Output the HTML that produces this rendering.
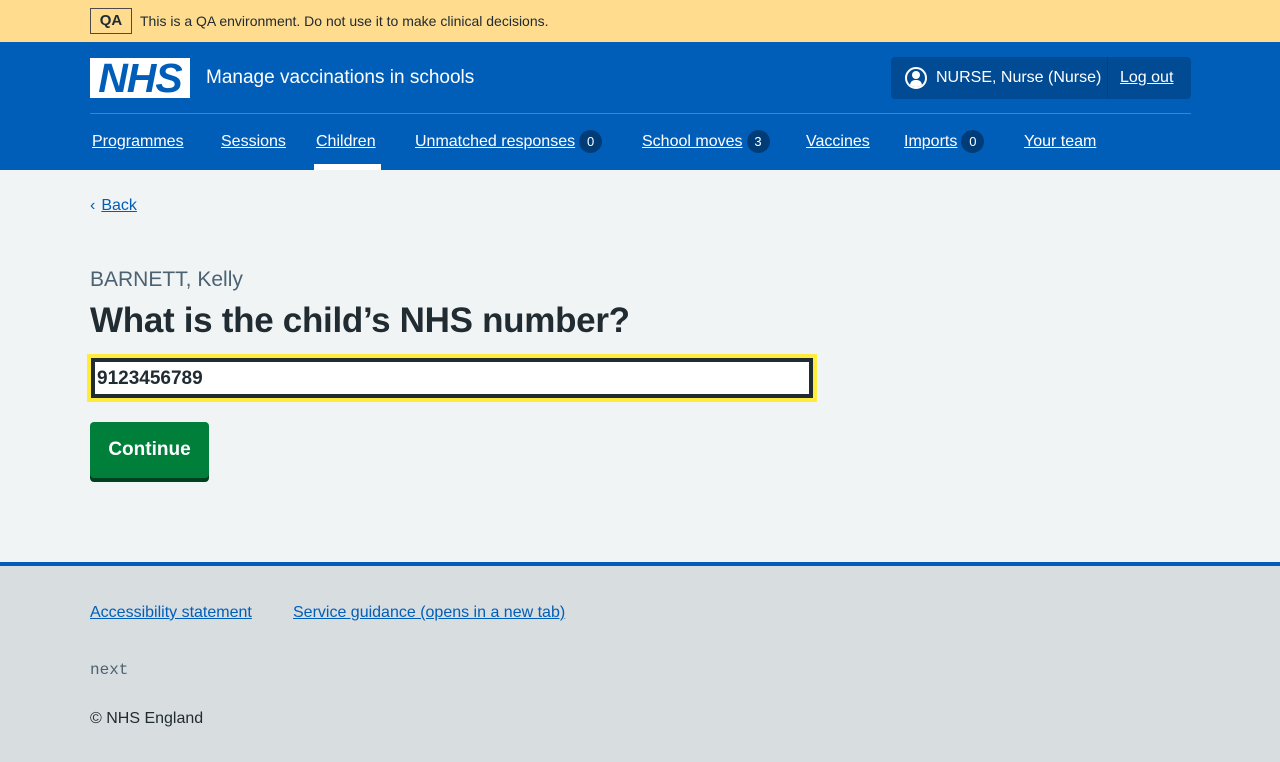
<!DOCTYPE html>
<html><head><meta charset="utf-8"><style>
*{box-sizing:border-box;margin:0;padding:0}
body{width:1280px;height:762px;font-family:"Liberation Sans",Arial,sans-serif;background:#f0f4f5;color:#212b32;overflow:hidden}
.qa{background:#ffdc8e;height:42px;position:relative}
.qa .tag{position:absolute;left:90px;top:8px;width:42px;height:26px;border:1px solid #4c4c4c;font-weight:bold;font-size:15px;text-align:center;line-height:24px}
.qa .t{position:absolute;left:140px;top:13px;font-size:14px}
.hd{background:#005eb8;height:128px;position:relative;color:#fff}
.logo{position:absolute;left:90px;top:16px;width:100px;height:40px;background:#fff}
.logo span{display:block;color:#005eb8;font-weight:bold;font-style:italic;font-size:41px;line-height:40px;text-align:center;letter-spacing:-1px}
.title{position:absolute;left:206px;top:25px;font-size:19px}
.acct{position:absolute;left:891px;top:15px;width:300px;height:42px;background:#004b93;border-radius:4px;font-size:16px}
.acct .ic{position:absolute;left:14px;top:10px;width:22px;height:22px;border:2px solid #fff;border-radius:50%;overflow:hidden}
.acct .n{position:absolute;left:45px;top:12px}
.acct .sep{position:absolute;left:216px;top:0;width:1px;height:42px;background:#00418a}
.acct .lo{position:absolute;left:229px;top:12px;text-decoration:underline}
.line{position:absolute;left:90px;right:89px;top:71px;height:1px;background:#3f83c9}
.nav{position:absolute;top:88px;height:24px;line-height:24px;font-size:16px;text-decoration:underline;white-space:nowrap}
.b{display:inline-block;background:#003d78;border-radius:12px;min-width:23px;height:23px;text-align:center;font-size:13px;line-height:23px;text-decoration:none;margin-left:4px;vertical-align:top}
.act{position:absolute;left:314px;top:122px;width:67px;height:6px;background:#fff}
a{color:#005eb8}
.back{position:absolute;left:90px;top:197px;font-size:16px;color:#005eb8}
.back u{margin-left:6px}
.cap{position:absolute;left:90px;top:268px;font-size:21px;color:#4c6272}
h1{position:absolute;left:90px;top:301px;font-size:35px;font-weight:bold;letter-spacing:-0.3px}
.in{position:absolute;left:87px;top:354px;width:730px;height:48px;background:#ffeb3b;padding:4px}
.in div{width:100%;height:100%;background:#fff;border:4px solid #212b32;font-size:19px;font-weight:bold;padding:6px 2px}
.btn{position:absolute;left:90px;top:422px;width:119px;height:56px;background:#007f3b;border-radius:4px;box-shadow:0 4px 0 #00401e;color:#fff;font-weight:bold;font-size:19px;text-align:center;line-height:56px}
.ft{position:absolute;left:0;top:562px;width:1280px;height:200px;background:#d8dde0;border-top:4px solid #005eb8}
.ft a{position:absolute;top:38px;font-size:16px;text-decoration:underline}
.mono{position:absolute;left:90px;top:95px;font-family:"Liberation Mono",monospace;font-size:16px;color:#4c6272}
.copy{position:absolute;left:90px;top:144px;font-size:16px}
</style></head><body>
<div class="qa"><div class="tag">QA</div><div class="t">This is a QA environment. Do not use it to make clinical decisions.</div></div>
<div class="hd">
<div class="logo"><span>NHS</span></div>
<div class="title">Manage vaccinations in schools</div>
<div class="acct"><div class="ic"><div style="position:absolute;left:5px;top:2px;width:8px;height:8px;background:#fff;border-radius:50%"></div><div style="position:absolute;left:3px;top:11px;width:12px;height:10px;background:#fff;border-radius:5px 5px 0 0"></div></div><span class="n">NURSE, Nurse (Nurse)</span><div class="sep"></div><span class="lo">Log out</span></div>
<div class="line"></div>
<span class="nav" style="left:92px">Programmes</span>
<span class="nav" style="left:221px">Sessions</span>
<span class="nav" style="left:316px">Children</span>
<span class="nav" style="left:415px">Unmatched responses<span class="b">0</span></span>
<span class="nav" style="left:642px">School moves<span class="b">3</span></span>
<span class="nav" style="left:806px">Vaccines</span>
<span class="nav" style="left:904px">Imports<span class="b">0</span></span>
<span class="nav" style="left:1024px">Your team</span>
<div class="act"></div>
</div>
<div class="back">‹<u>Back</u></div>
<div class="cap">BARNETT, Kelly</div>
<h1>What is the child’s NHS number?</h1>
<div class="in"><div>9123456789</div></div>
<div class="btn">Continue</div>
<div class="ft">
<a style="left:90px">Accessibility statement</a>
<a style="left:293px">Service guidance (opens in a new tab)</a>
<div class="mono">next</div>
<div class="copy">© NHS England</div>
</div>
</body></html>
